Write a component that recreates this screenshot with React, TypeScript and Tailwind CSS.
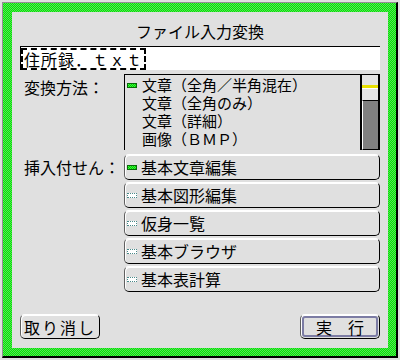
import React from "react";

const font = { fontFamily: '"Noto Sans CJK JP", "Noto Sans", sans-serif' };

function Marker({ active }: { active?: boolean }) {
  return active ? (
    <span className="inline-block w-[10px] h-[5px] shrink-0 border border-[#0a6a0a] bg-[image:repeating-conic-gradient(#00d000_0%_25%,#40f040_0%_50%)] bg-[length:2px_2px]" />
  ) : (
    <span className="inline-block w-[10px] h-[5px] shrink-0 border border-dotted border-[#4a8a8a] bg-white" />
  );
}

function FusenButton({ label, active }: { label: string; active?: boolean }) {
  return (
    <div className="h-[26px] flex items-center gap-[4px] pl-[2px] rounded-[5px] border border-t-white border-l-[#606060] border-r-black border-b-black shadow-[inset_1px_1px_0_#ffffff] text-[16px] leading-[18px] text-black">
      <Marker active={active} />
      <span>{label}</span>
    </div>
  );
}

export default function App() {
  const items = ["文章（全角／半角混在）", "文章（全角のみ）", "文章（詳細）", "画像（ＢＭＰ）"];
  const fusen = ["基本文章編集", "基本図形編集", "仮身一覧", "基本ブラウザ", "基本表計算"];
  return (
    <div className="w-[400px] h-[360px] bg-[#e0e0e0] pt-[2px] pl-[2px] pr-[2px] pb-[2px]" style={font}>
      <div className="w-full h-full border-l border-t border-l-[#909090] border-t-[#909090] border-r-2 border-b-2 border-r-black border-b-black bg-[image:repeating-conic-gradient(#00ee00_0%_25%,#5cd85c_0%_50%)] bg-[length:2px_2px] pl-[9px] pt-[9px] pr-[8px] pb-[8px]">
        <div className="w-full h-full bg-[#e0e0e0] flex flex-col px-[8px] pt-[9px] pb-[9px] text-black">
          <div className="text-center text-[16px] leading-[20px] h-[20px]">ファイル入力変換</div>
          <div className="mt-[5px] h-[24px] bg-white border-l border-t border-black flex items-center">
            <span className="inline-flex items-center h-[22px] border-2 border-dashed border-black pl-[1px] pr-[1px] text-[16px] leading-[18px] tracking-[1px]">
              住所録．ｔｘｔ
            </span>
          </div>
          <div className="mt-[4px] h-[76px] flex">
            <div className="w-[104px] pl-[4px] pt-[4px] text-[16px] leading-[18px]">変換方法：</div>
            <div className="flex-1 flex border-t border-l border-black">
              <div className="flex-1 pt-[1px] pl-[2px]">
                {items.map((it, i) => (
                  <div key={i} className="flex items-center gap-[5px] h-[18px] text-[15px] leading-[18px]">
                    {i === 0 ? <Marker active /> : <span className="inline-block w-[10px] shrink-0" />}
                    <span className="leading-[18px]">{it}</span>
                  </div>
                ))}
              </div>
              <div className="w-[20px] border-l-2 border-r-2 border-black flex flex-col">
                <div className="h-[25px] bg-[#e4e4e4] pt-[10px]">
                  <div className="h-[3px] bg-[#e8e000]" />
                  <div className="h-[1px] bg-white" />
                </div>
                <div className="flex-1 border-t border-b border-black bg-[#808080] border-l border-l-white" />
              </div>
            </div>
          </div>
          <div className="mt-[4px] flex">
            <div className="w-[104px] pl-[4px] pt-[4px] text-[16px] leading-[18px]">挿入付せん：</div>
            <div className="flex-1 flex flex-col gap-[2px]">
              {fusen.map((f, i) => (
                <FusenButton key={i} label={f} active={i === 0} />
              ))}
            </div>
          </div>
          <div className="mt-[22px] flex justify-between">
            <div className="w-[80px] h-[25px] flex items-center justify-center rounded-[5px] border border-t-white border-l-[#606060] border-r-black border-b-black shadow-[inset_1px_1px_0_#ffffff] text-[16px] leading-[18px] tracking-[2px]">
              取り消し
            </div>
            <div className="w-[80px] h-[25px] p-[1px] rounded-[5px] border border-t-white border-l-[#606060] border-r-black border-b-black shadow-[inset_1px_1px_0_#ffffff]">
              <div className="w-full h-full rounded-[3px] border-2 border-[#7c7ca4] flex items-center justify-center text-[16px] leading-[18px]">
                実　行
              </div>
            </div>
          </div>
        </div>
      </div>
    </div>
  );
}
